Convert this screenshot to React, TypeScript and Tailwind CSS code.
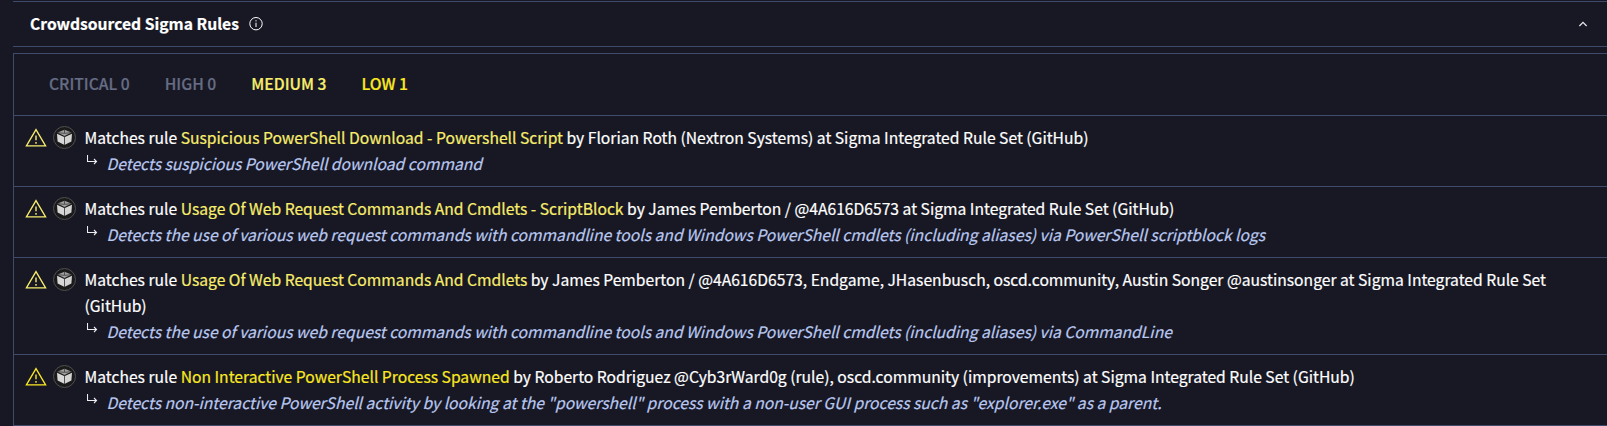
import React from "react";

type Severity = "medium" | "low";

interface Rule {
  severity: Severity;
  name: string;
  author: string;
  description: string;
}

const rules: Rule[] = [
  {
    severity: "medium",
    name: "Suspicious PowerShell Download - Powershell Script",
    author: "Florian Roth (Nextron Systems)",
    description: "Detects suspicious PowerShell download command",
  },
  {
    severity: "medium",
    name: "Usage Of Web Request Commands And Cmdlets - ScriptBlock",
    author: "James Pemberton / @4A616D6573",
    description:
      "Detects the use of various web request commands with commandline tools and Windows PowerShell cmdlets (including aliases) via PowerShell scriptblock logs",
  },
  {
    severity: "medium",
    name: "Usage Of Web Request Commands And Cmdlets",
    author:
      "James Pemberton / @4A616D6573, Endgame, JHasenbusch, oscd.community, Austin Songer @austinsonger",
    description:
      "Detects the use of various web request commands with commandline tools and Windows PowerShell cmdlets (including aliases) via CommandLine",
  },
  {
    severity: "low",
    name: "Non Interactive PowerShell Process Spawned",
    author: "Roberto Rodriguez @Cyb3rWard0g (rule), oscd.community (improvements)",
    description:
      'Detects non-interactive PowerShell activity by looking at the "powershell" process with a non-user GUI process such as "explorer.exe" as a parent.',
  },
];

const severityColor: Record<Severity, string> = {
  medium: "text-[#f8ee6c]",
  low: "text-[#fbe921]",
};

function WarningIcon() {
  return (
    <svg width="22" height="20" viewBox="0 0 22 20" fill="none" stroke="currentColor" className="mt-[12px] shrink-0">
      <path d="M11 1.6 L20.6 17.9 H1.4 Z" strokeWidth="1.3" />
      <path d="M11 7.5v4.8M11 14v1.8" strokeWidth="1.4" />
    </svg>
  );
}

function CubeIcon() {
  return (
    <svg width="23" height="23" viewBox="0 0 23 23" className="mt-[10px] ml-[6px] shrink-0">
      <circle cx="11.5" cy="11.5" r="11" fill="#1a1a1a" stroke="#505050" />
      <path d="M11.5 3.8 18.4 6.6 11.5 10 4.6 6.6Z" fill="#a0a0a0" />
      <path d="M11.5 3.8V7M4.6 6.6 11.5 7.4 18.4 6.6" stroke="#3c3c3c" strokeWidth="0.8" fill="none" />
      <path d="M4 7.8 11.1 11V18.8L4.6 15.5Z" fill="#d8d8d8" />
      <path d="M19 7.8 11.9 11V18.8L18.4 15.5Z" fill="#d4d4d4" />
      <path d="M11.5 10.6V18.8" stroke="#555" strokeWidth="0.8" />
    </svg>
  );
}

function ReplyArrow() {
  return (
    <svg width="12" height="11" viewBox="0 0 12 11" fill="none" stroke="#ececf2" strokeWidth="1.1" className="mt-[4px] ml-[2.5px] shrink-0">
      <path d="M0.5 0V6.5H9.5M7 4l2.5 2.5L7 9" />
    </svg>
  );
}

function RuleRow({ rule }: { rule: Rule }) {
  const color = severityColor[rule.severity];
  return (
    <div className="flex border-b border-[#3f4b6a] pl-[11px]">
      <div className={`flex shrink-0 ${color}`}>
        <WarningIcon />
        <CubeIcon />
      </div>
      <div className="ml-[8.5px] pt-[9px] pb-[9px]">
        <p className="w-[1490px] leading-[26px] text-white">
          Matches rule <span className={color}>{rule.name}</span> by {rule.author} at Sigma Integrated Rule Set (GitHub)
        </p>
        <div className="flex">
          <ReplyArrow />
          <p className="ml-[7.5px] leading-[26px] whitespace-nowrap text-[#b9c8f0] italic">{rule.description}</p>
        </div>
      </div>
    </div>
  );
}

export default function App() {
  return (
    <div className="h-[426px] w-full overflow-hidden bg-[#181824] pt-px pl-[13px] font-['Noto_Sans_CJK_SC',sans-serif] text-[15.66px] [-webkit-text-stroke:0.2px_currentColor]">
      <header className="flex h-[46px] items-center border-y border-[#3f4b6a] pl-[17px]">
        <h2 className="leading-[26px] font-bold text-white">Crowdsourced Sigma Rules</h2>
        <svg width="14" height="14" viewBox="0 0 14 14" fill="none" stroke="#fff" className="ml-[10.5px]">
          <circle cx="7" cy="6.7" r="6.2" strokeWidth="1" />
          <path d="M7 5.7v4.3M7 3.2v1.2" strokeWidth="1" />
        </svg>
        <svg width="10" height="6" viewBox="0 0 10 6" fill="none" stroke="#e6e6ea" strokeWidth="1.3" className="mr-[19px] mb-px ml-auto">
          <path d="M1.4 5 5 1.4 8.6 5" />
        </svg>
      </header>
      <section className="mt-[6px] w-[1610px] border-t border-l border-[#3f4b6a]">
        <div className="flex h-[62px] items-center gap-[35.1px] border-b border-[#3f4b6a] pb-px pl-[35px] leading-[26px] font-medium">
          <span className="text-[#666d84]">CRITICAL 0</span>
          <span className="text-[#666d84]">HIGH 0</span>
          <span className="text-[#f8ee6c]">MEDIUM 3</span>
          <span className="text-[#fbe921]">LOW 1</span>
        </div>
        {rules.map((rule) => (
          <RuleRow key={rule.name} rule={rule} />
        ))}
      </section>
    </div>
  );
}
